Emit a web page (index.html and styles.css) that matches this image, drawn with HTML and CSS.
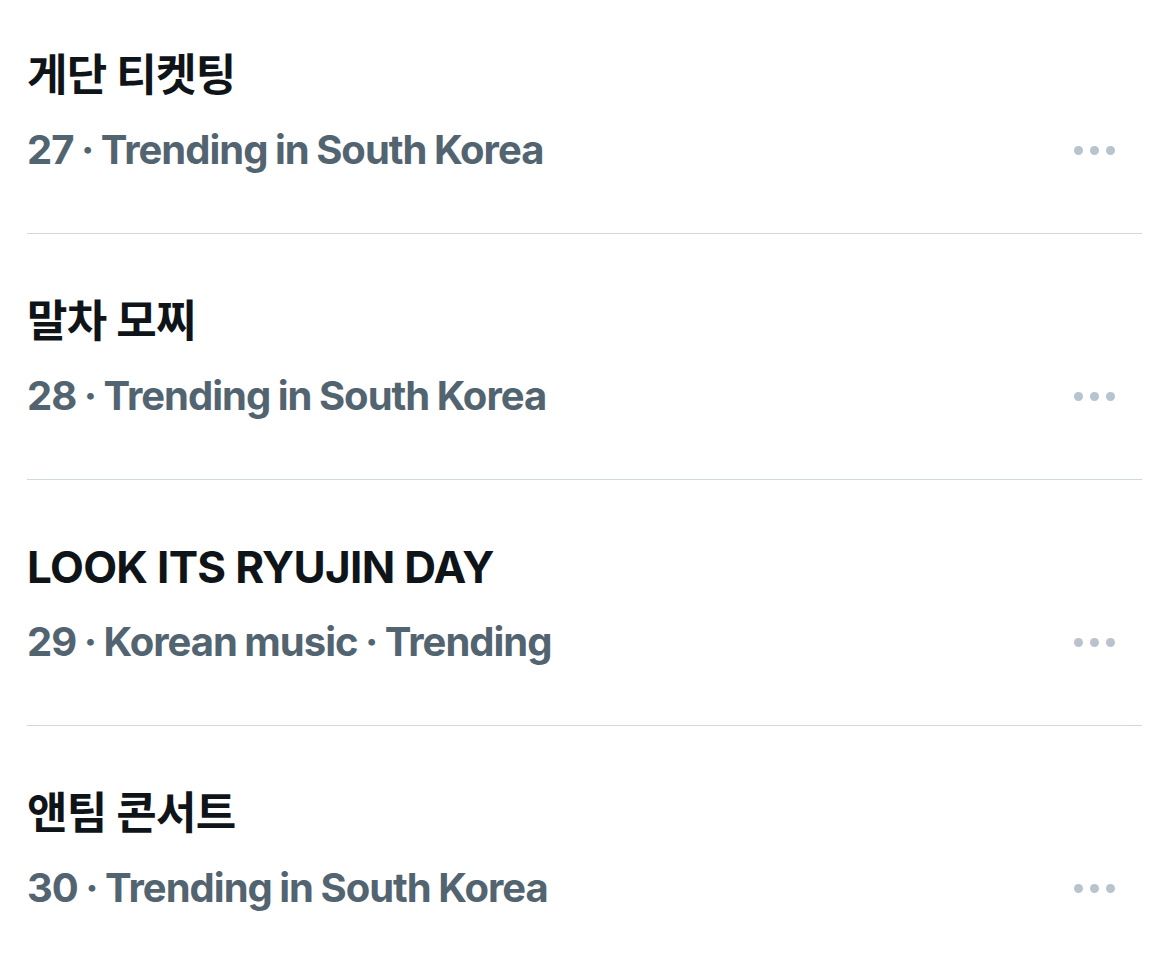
FILE: index.html
```html
<!DOCTYPE html>
<html lang="ko">
<head>
<meta charset="utf-8">
<link rel="stylesheet" href="styles.css">
</head>
<body>
<div class="list">
  <div class="trend">
    <div class="title">게단 티켓팅</div>
    <div class="meta-row">
      <div class="meta">27 · Trending in South Korea</div>
      <div class="more"><span></span><span></span><span></span></div>
    </div>
  </div>
  <div class="trend">
    <div class="title">말차 모찌</div>
    <div class="meta-row">
      <div class="meta">28 · Trending in South Korea</div>
      <div class="more"><span></span><span></span><span></span></div>
    </div>
  </div>
  <div class="trend">
    <div class="title">LOOK ITS RYUJIN DAY</div>
    <div class="meta-row">
      <div class="meta">29 · Korean music · Trending</div>
      <div class="more"><span></span><span></span><span></span></div>
    </div>
  </div>
  <div class="trend last">
    <div class="title">앤팀 콘서트</div>
    <div class="meta-row">
      <div class="meta">30 · Trending in South Korea</div>
      <div class="more"><span></span><span></span><span></span></div>
    </div>
  </div>
</div>
</body>
</html>
```
FILE: styles.css
```css
html, body {
  margin: 0;
  padding: 0;
  background: #ffffff;
}
body {
  font-family: Inter, "Noto Sans CJK KR", sans-serif;
  -webkit-font-smoothing: antialiased;
}
.list {
  margin: 0 28px 0 27px;
}
.trend {
  padding: 59px 0 55px;
  border-bottom: 1px solid #cfd9de;
}
.trend:first-child {
  padding-top: 47px;
}
.trend.last {
  border-bottom: none;
}
.title {
  font-size: 44px;
  line-height: 56px;
  font-weight: 700;
  color: #0f1419;
  letter-spacing: -0.7px;
}
.meta-row {
  display: flex;
  align-items: center;
  justify-content: space-between;
  margin-top: 19px;
  height: 56px;
}
.meta {
  font-size: 40px;
  line-height: 56px;
  font-weight: 700;
  color: #536471;
  letter-spacing: -1px;
  word-spacing: -1px;
}
.more {
  display: flex;
  gap: 7px;
  margin-right: 27px;
}
.more span {
  width: 9px;
  height: 9px;
  border-radius: 50%;
  background: #b9c3cc;
}
```
